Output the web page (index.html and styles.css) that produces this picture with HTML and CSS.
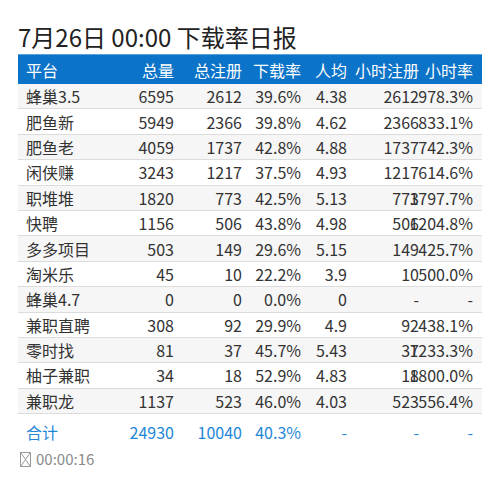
FILE: index.html
```html
<!DOCTYPE html>
<html lang="zh">
<head>
<meta charset="utf-8">
<link rel="stylesheet" href="styles.css">
</head>
<body>
<div class="page">
  <h1 class="title">7月26日 00:00 下载率日报</h1>
  <div class="table">
    <div class="row head">
      <div class="c name">平台</div><div class="c">总量</div><div class="c">总注册</div><div class="c">下载率</div><div class="c">人均</div><div class="c">小时注册</div><div class="c">小时率</div>
    </div>
    <div class="row odd"><div class="c name">蜂巢3.5</div><div class="c">6595</div><div class="c">2612</div><div class="c">39.6%</div><div class="c">4.38</div><div class="c">2612</div><div class="c">978.3%</div></div>
    <div class="row"><div class="c name">肥鱼新</div><div class="c">5949</div><div class="c">2366</div><div class="c">39.8%</div><div class="c">4.62</div><div class="c">2366</div><div class="c">833.1%</div></div>
    <div class="row odd"><div class="c name">肥鱼老</div><div class="c">4059</div><div class="c">1737</div><div class="c">42.8%</div><div class="c">4.88</div><div class="c">1737</div><div class="c">742.3%</div></div>
    <div class="row"><div class="c name">闲侠赚</div><div class="c">3243</div><div class="c">1217</div><div class="c">37.5%</div><div class="c">4.93</div><div class="c">1217</div><div class="c">614.6%</div></div>
    <div class="row odd"><div class="c name">职堆堆</div><div class="c">1820</div><div class="c">773</div><div class="c">42.5%</div><div class="c">5.13</div><div class="c">773</div><div class="c">1797.7%</div></div>
    <div class="row"><div class="c name">快聘</div><div class="c">1156</div><div class="c">506</div><div class="c">43.8%</div><div class="c">4.98</div><div class="c">506</div><div class="c">1204.8%</div></div>
    <div class="row odd"><div class="c name">多多项目</div><div class="c">503</div><div class="c">149</div><div class="c">29.6%</div><div class="c">5.15</div><div class="c">149</div><div class="c">425.7%</div></div>
    <div class="row"><div class="c name">淘米乐</div><div class="c">45</div><div class="c">10</div><div class="c">22.2%</div><div class="c">3.9</div><div class="c">10</div><div class="c">500.0%</div></div>
    <div class="row odd"><div class="c name">蜂巢4.7</div><div class="c">0</div><div class="c">0</div><div class="c">0.0%</div><div class="c">0</div><div class="c">-</div><div class="c">-</div></div>
    <div class="row"><div class="c name">兼职直聘</div><div class="c">308</div><div class="c">92</div><div class="c">29.9%</div><div class="c">4.9</div><div class="c">92</div><div class="c">438.1%</div></div>
    <div class="row odd"><div class="c name">零时找</div><div class="c">81</div><div class="c">37</div><div class="c">45.7%</div><div class="c">5.43</div><div class="c">37</div><div class="c">1233.3%</div></div>
    <div class="row"><div class="c name">柚子兼职</div><div class="c">34</div><div class="c">18</div><div class="c">52.9%</div><div class="c">4.83</div><div class="c">18</div><div class="c">1800.0%</div></div>
    <div class="row odd"><div class="c name">兼职龙</div><div class="c">1137</div><div class="c">523</div><div class="c">46.0%</div><div class="c">4.03</div><div class="c">523</div><div class="c">556.4%</div></div>
    <div class="row total"><div class="c name">合计</div><div class="c">24930</div><div class="c">10040</div><div class="c">40.3%</div><div class="c">-</div><div class="c">-</div><div class="c">-</div></div>
  </div>
  <div class="footer">
    <svg class="tofu" width="11" height="15" viewBox="0 0 11 15"><rect x="0.5" y="0.5" width="10" height="14" fill="none" stroke="#999" stroke-width="1"/><path d="M1 1 L10 14 M10 1 L1 14" stroke="#999" stroke-width="1" fill="none"/></svg>
    <span>00:00:16</span>
  </div>
</div>
</body>
</html>
```
FILE: styles.css
```css
html, body {
  margin: 0;
  padding: 0;
  background: #ffffff;
}
body {
  font-family: "Noto Sans CJK SC", "Noto Sans", sans-serif;
  color: #333333;
}
.page {
  padding: 20px 0 0 18px;
  width: 464px;
}
.title {
  margin: 0;
  font-size: 24px;
  font-weight: normal;
  line-height: 34px;
  color: #222222;
}
.table {
  width: 464px;
  font-size: 16px;
}
.row {
  display: grid;
  grid-template-columns: 85px 80px 68px 59px 46px 72px 54px;
  height: 25.4px;
  box-sizing: border-box;
  border-bottom: 1px solid #dcdcdc;
  align-items: center;
}
.row.odd {
  background: #f6f6f6;
}
.row.head {
  height: 30px;
  background: #0b73c8;
  border-top: 1px solid #5aa0dd;
  border-bottom: none;
  color: #ffffff;
}
.row.total {
  height: 35px;
  border-bottom: none;
  color: #1f87d8;
}
.c {
  display: flex;
  justify-content: flex-end;
  white-space: nowrap;
  padding-right: 9px;
  line-height: 22px;
  min-width: 0;
}
.c.name {
  justify-content: flex-start;
  padding-left: 8px;
  padding-right: 0;
}
.footer {
  display: flex;
  align-items: center;
  gap: 5px;
  padding-left: 2px;
  font-size: 15px;
  color: #8a8a8a;
  line-height: 20px;
}
.tofu {
  display: block;
}
```
